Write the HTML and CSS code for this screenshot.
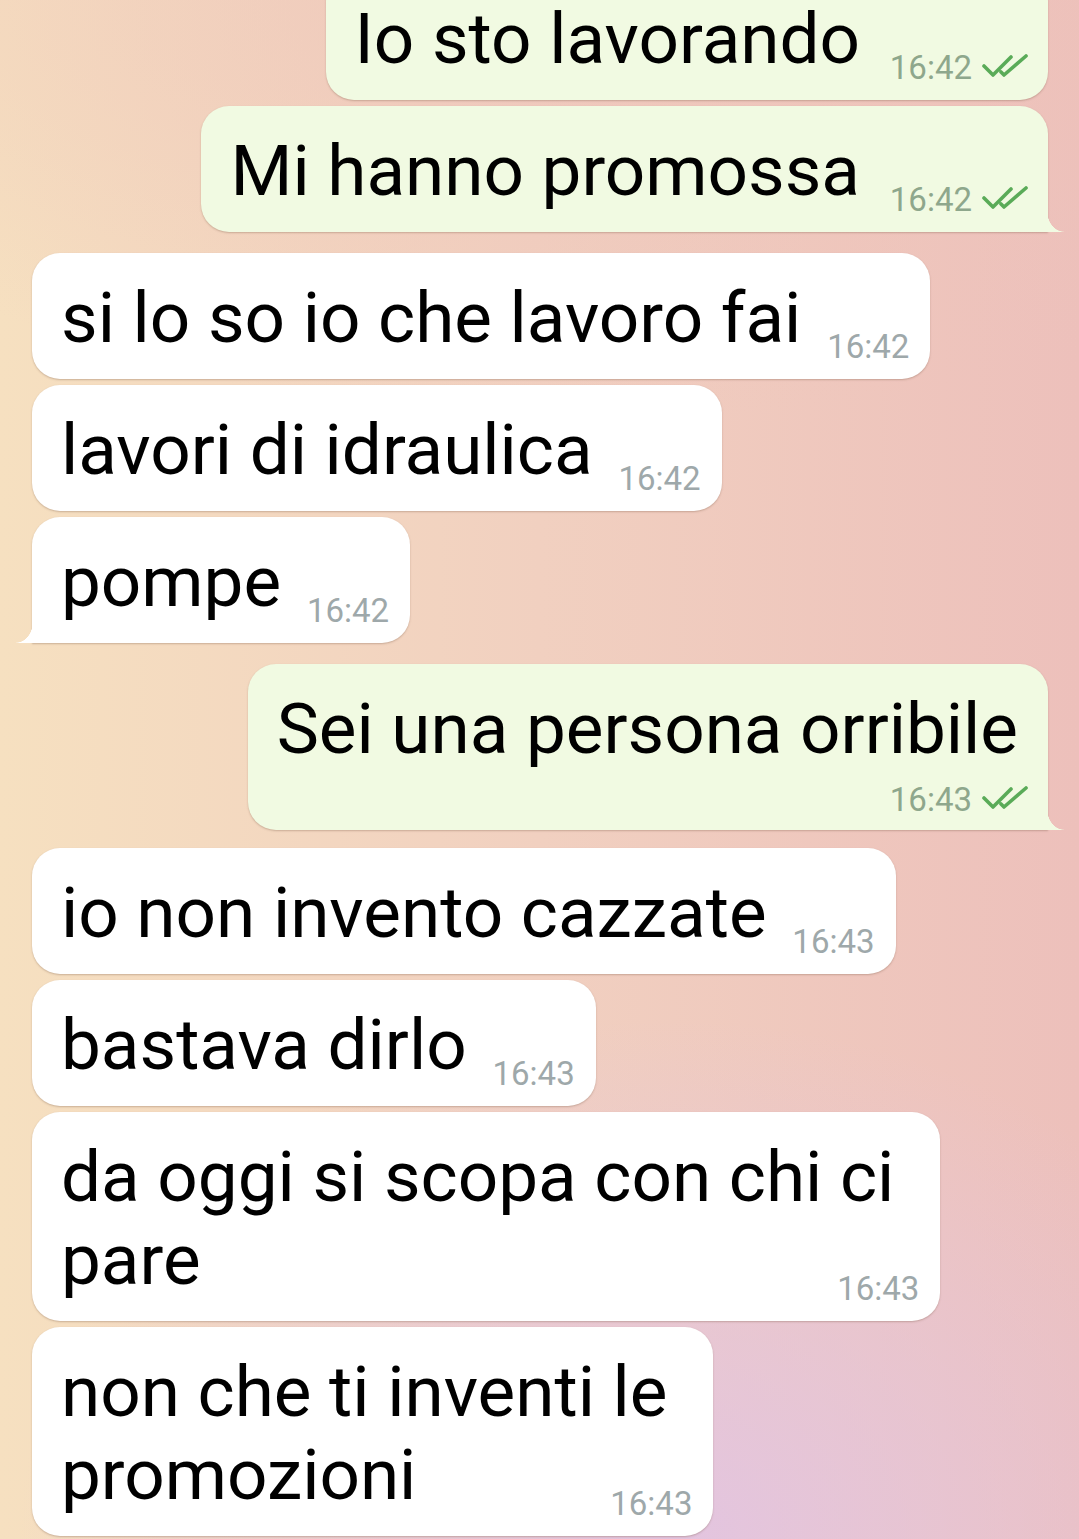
FILE: index.html
```html
<!DOCTYPE html>
<html lang="it">
<head>
  <meta charset="UTF-8">
  <meta name="viewport" content="width=device-width, initial-scale=1">
  <title>Chat</title>
  <link rel="stylesheet" href="styles.css">
</head>
<body>
  <div class="chat">
    <div class="group out first">
      <div class="bubble">
        Io sto lavorando<span class="pad"></span>
        <span class="time">16:42 <svg class="ticks" viewBox="0 0 46 24"><path d="M2 12 L11 21 L29 3 M19 18 L22 21 L44 2"/></svg></span>
      </div>
      <div class="bubble tail">
        Mi hanno promossa<span class="pad"></span>
        <span class="time">16:42 <svg class="ticks" viewBox="0 0 46 24"><path d="M2 12 L11 21 L29 3 M19 18 L22 21 L44 2"/></svg></span>
      </div>
    </div>

    <div class="group in">
      <div class="bubble">si lo so io che lavoro fai<span class="pad"></span><span class="time">16:42</span></div>
      <div class="bubble">lavori di idraulica<span class="pad"></span><span class="time">16:42</span></div>
      <div class="bubble tail">pompe<span class="pad"></span><span class="time">16:42</span></div>
    </div>

    <div class="group out after-tail">
      <div class="bubble tail long">
        Sei una persona orribile
        <span class="time">16:43 <svg class="ticks" viewBox="0 0 46 24"><path d="M2 12 L11 21 L29 3 M19 18 L22 21 L44 2"/></svg></span>
      </div>
    </div>

    <div class="group in close">
      <div class="bubble">io non invento cazzate<span class="pad"></span><span class="time">16:43</span></div>
      <div class="bubble">bastava dirlo<span class="pad"></span><span class="time">16:43</span></div>
      <div class="bubble multi">da oggi si scopa con chi ci<br>pare<span class="pad"></span><span class="time">16:43</span></div>
      <div class="bubble multi">non che ti inventi le<br>promozioni<span class="pad"></span><span class="time">16:43</span></div>
    </div>
  </div>
</body>
</html>
```

FILE: styles.css
```css
html, body {
  margin: 0;
  padding: 0;
  height: 100%;
}

body {
  font-family: Roboto, 'Noto Sans', sans-serif;
  overflow: hidden;
  background:
    radial-gradient(ellipse 650px 520px at 62% 100%, rgba(226, 196, 226, 0.95), rgba(226, 196, 226, 0)),
    radial-gradient(ellipse 900px 420px at 55% 0%, rgba(238, 196, 186, 0.75), rgba(238, 196, 186, 0)),
    linear-gradient(to right, #f6e0c0 0%, #f1d0c0 50%, #edc0bb 100%);
}

.chat {
  display: flex;
  flex-direction: column;
  gap: 21px;
  padding: 0 31px 0 32px;
}

.group {
  display: flex;
  flex-direction: column;
  gap: 6px;
}

.group.first {
  margin-top: -26px;
}

.group.close {
  margin-top: -3px;
}

.group.out {
  align-items: flex-end;
}

.group.in {
  align-items: flex-start;
}

.bubble {
  position: relative;
  background: #fff;
  color: #000;
  font-size: 71px;
  line-height: 83px;
  padding: 23px 21px 20px 29px;
  border-radius: 28px;
  box-shadow: 0 1px 2px rgba(120, 90, 70, 0.35);
  white-space: nowrap;
}

.out .bubble {
  background: #f1fae2;
  padding-right: 20px;
}

.pad {
  display: inline-block;
  width: 108px;
  height: 1px;
}

.out .pad {
  width: 168px;
}

.time {
  position: absolute;
  right: 21px;
  bottom: 16px;
  font-size: 33px;
  line-height: 33px;
  color: #9ea8aa;
  display: flex;
  align-items: center;
  gap: 10px;
}

.out .time {
  right: 20px;
  color: #8ea78c;
}

.ticks {
  width: 46px;
  height: 24px;
  fill: none;
  stroke: #5aab58;
  stroke-width: 3.6;
  stroke-linecap: round;
  stroke-linejoin: round;
  margin-top: -4px;
}

.bubble.multi {
  padding-right: 46px;
}

.bubble.long {
  padding-right: 30px;
}

.bubble.long .time {
  position: static;
  justify-content: flex-end;
  margin: 13px -10px -6px 0;
}

/* coda della bolla */
.bubble.tail::after {
  content: "";
  position: absolute;
  bottom: 0;
  width: 17px;
  height: 21px;
}

.out .bubble.tail {
  border-bottom-right-radius: 0;
}

.out .bubble.tail::after {
  right: -16px;
  background: radial-gradient(ellipse 17px 21px at 100% 0, rgba(241, 250, 226, 0) 97%, #f1fae2 100%);
}

.in .bubble.tail {
  border-bottom-left-radius: 0;
}

.in .bubble.tail::after {
  left: -16px;
  background: radial-gradient(ellipse 17px 21px at 0 0, rgba(255, 255, 255, 0) 97%, #fff 100%);
}
```
